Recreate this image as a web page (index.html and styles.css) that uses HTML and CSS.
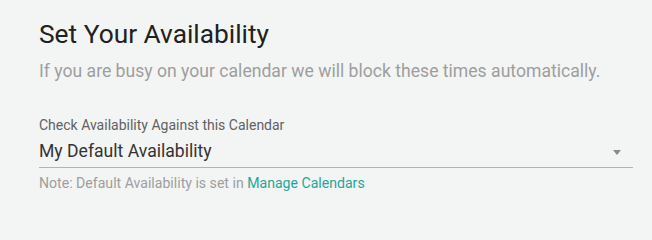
FILE: index.html
```html
<!DOCTYPE html>
<html lang="en">
<head>
<meta charset="utf-8">
<title>Set Your Availability</title>
<link rel="stylesheet" href="styles.css">
</head>
<body>
<section class="panel">
  <h1 class="title">Set Your Availability</h1>
  <p class="subtitle">If you are busy on your calendar we will block these times automatically.</p>
  <div class="field">
    <label class="field-label">Check Availability Against this Calendar</label>
    <div class="select">
      <span class="select-value">My Default Availability</span>
      <span class="caret"></span>
    </div>
    <p class="note">Note: Default Availability is set in <a class="link" href="#">Manage Calendars</a></p>
  </div>
</section>
</body>
</html>
```
FILE: styles.css
```css
html, body {
  margin: 0;
  padding: 0;
  background: #f3f5f4;
}
body {
  font-family: Roboto, "Noto Sans", "Liberation Sans", sans-serif;
  width: 652px;
  height: 216px;
  overflow: hidden;
}
.panel {
  padding: 19px 19px 0 39px;
}
.title {
  margin: 0;
  font-size: 26.3px;
  line-height: 30px;
  font-weight: 400;
  color: #212121;
}
.subtitle {
  margin: 11px 0 0;
  font-size: 17.6px;
  line-height: 22px;
  font-weight: 400;
  color: #9e9e9e;
}
.field {
  margin-top: 34px;
}
.field-label {
  display: block;
  font-size: 14px;
  line-height: 18px;
  color: #616161;
}
.select {
  display: flex;
  align-items: center;
  justify-content: space-between;
  margin-top: 6px;
  padding: 0 12px 5px 0;
  border-bottom: 1px solid #b4b4b4;
}
.select-value {
  font-size: 17.6px;
  line-height: 22px;
  color: #333333;
}
.caret {
  width: 0;
  height: 0;
  border-left: 4.5px solid transparent;
  border-right: 4.5px solid transparent;
  border-top: 5px solid #8a8a8a;
  margin-top: 2px;
}
.note {
  margin: 7px 0 0;
  font-size: 14.1px;
  line-height: 16px;
  color: #9e9e9e;
}
.link {
  color: #26a69a;
  text-decoration: none;
}
```
